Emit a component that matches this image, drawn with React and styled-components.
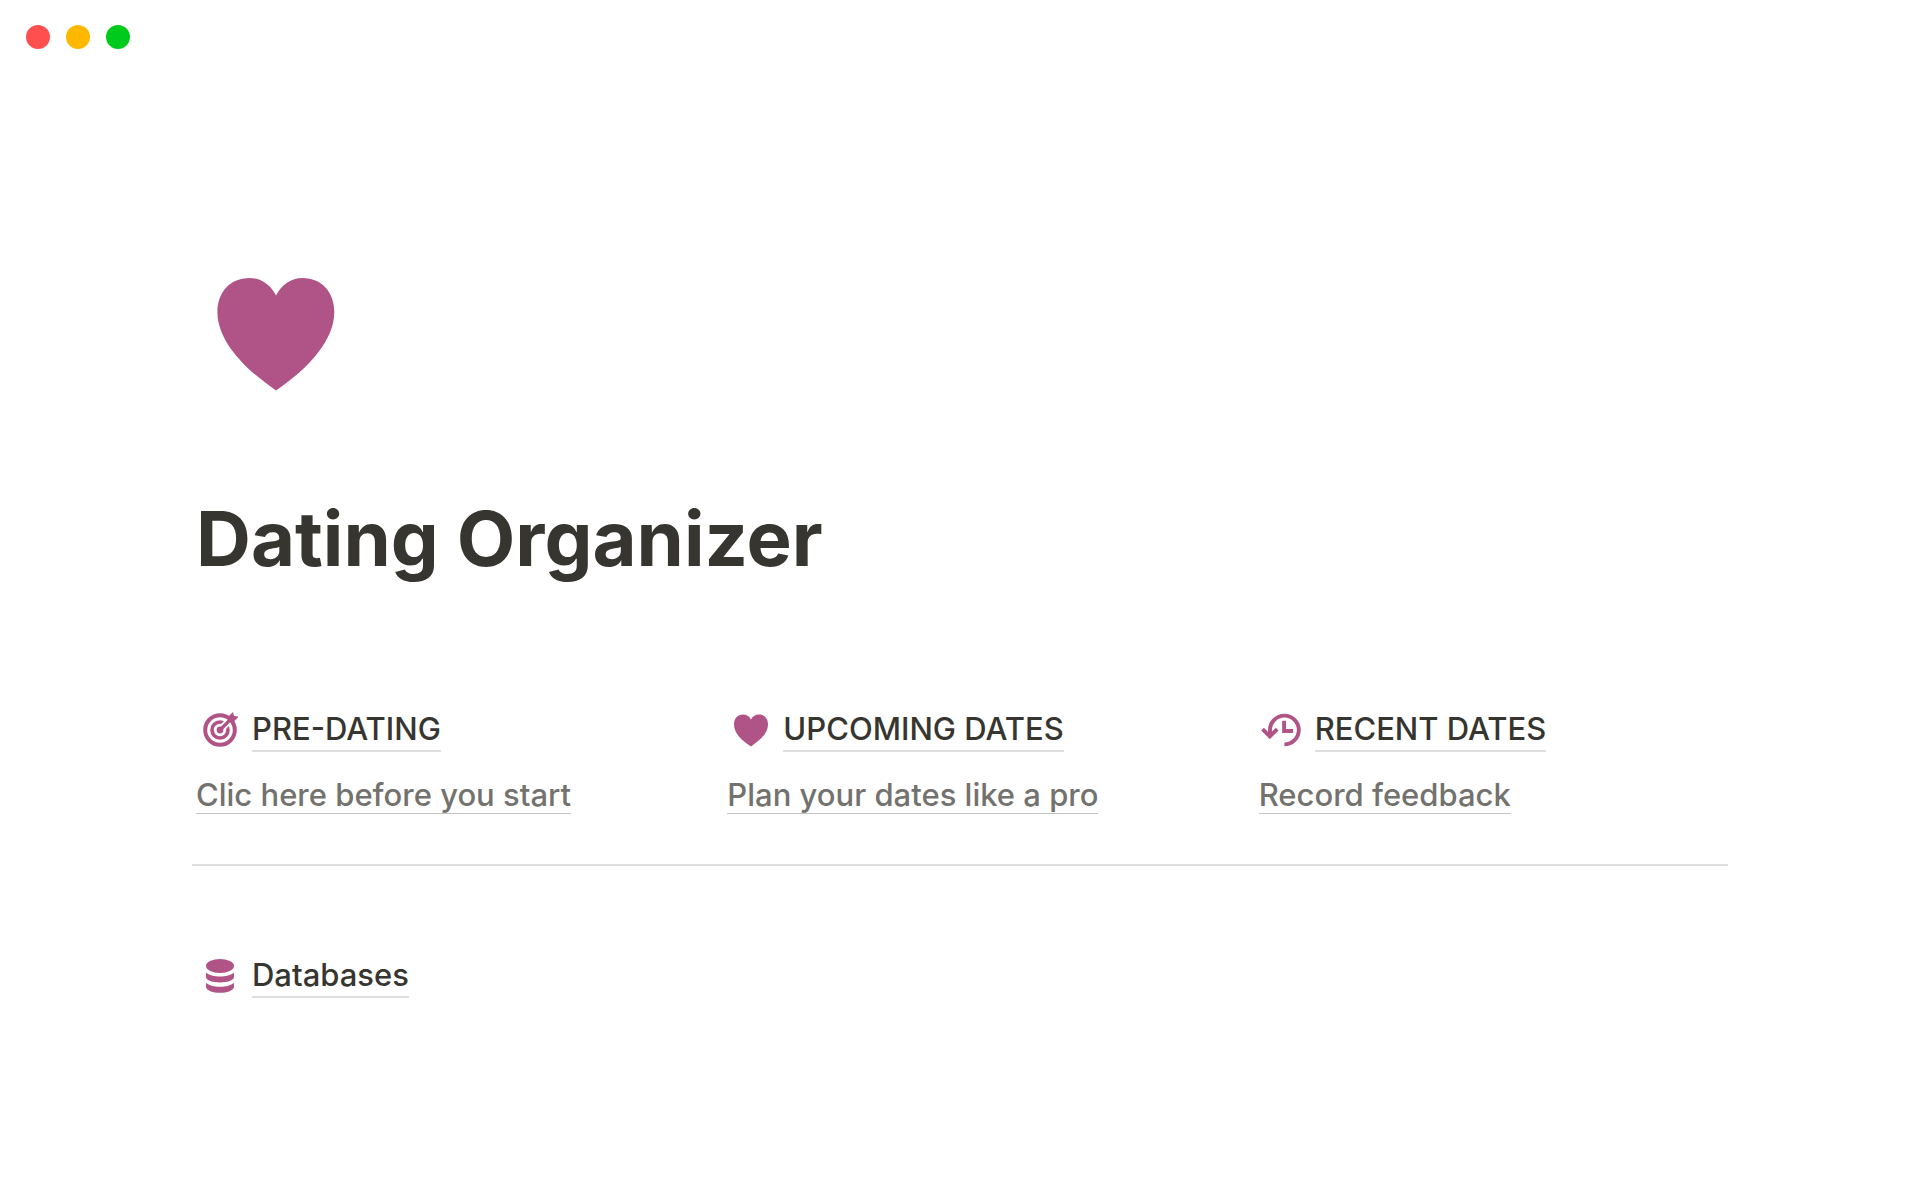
import React from "react";
import styled, { createGlobalStyle } from "styled-components";

const GlobalStyle = createGlobalStyle`
  * {
    box-sizing: border-box;
  }
  body {
    margin: 0;
    background: #fff;
    color: #37352f;
    font-family: Inter, "Liberation Sans", sans-serif;
  }
`

const Page = styled.div`
  min-height: 100vh;
`

const WindowBar = styled.header`
  display: flex;
  gap: 16px;
  padding: 25px 26px;
`

const Dot = styled.span`
  width: 24px;
  height: 24px;
  border-radius: 50%;
  background: ${props => props.$color};
`

const Content = styled.main`
  padding: 180px 10% 80px;
`

const Cover = styled.div`
  padding: 0 4px;
`

const PageIcon = styled.svg`
  display: block;
  width: 160px;
  height: 160px;
  fill: #b05488;
`

const Title = styled.h1`
  margin: 75px 0 119px;
  font-size: 76px;
  line-height: 98px;
  font-weight: 700;
`

const Columns = styled.div`
  display: grid;
  grid-template-columns: repeat(3, 1fr);
  gap: 58px;
`

const Column = styled.section`
  padding: 0 4px;
  white-space: nowrap;
`

const Heading = styled.h2`
  display: flex;
  align-items: center;
  gap: 8px;
  margin: 0;
  font-size: 31px;
  font-weight: 500;
`

const Icon = styled.svg`
  flex: none;
  width: 48px;
  height: 48px;
  fill: #b05488;
`

const PageLink = styled.a`
  border-bottom: 2px solid #dededd;
  color: inherit;
  line-height: 42px;
  text-decoration: none;
`

const Note = styled.p`
  display: flex;
  margin: 23px 0 0;
`

const NoteLink = styled.a`
  border-bottom: 1px solid #c4c4c2;
  color: #73726e;
  font-size: 31px;
  line-height: 36px;
  font-weight: 500;
  text-decoration: none;
`

const Divider = styled.hr`
  height: 2px;
  margin: 50px 0 86px;
  border: 0;
  background: #dededd;
`

const TargetIcon = () => (
  <Icon viewBox="0 0 48 48" aria-hidden="true">
    <g fill="none" stroke="#b05488">
      <circle cx="24" cy="24" r="14.8" strokeWidth="4" />
      <circle cx="24" cy="24" r="8" strokeWidth="3.6" />
    </g>
    <path fill="none" stroke="#fff" strokeWidth="7" d="M26 22 L31.6 16.4" />
    <circle cx="24" cy="24" r="3.4" />
    <path fill="none" stroke="#b05488" strokeWidth="3.2" d="M24 24 L35 13" />
    <path d="M31.8 16.2 V11 L37 6 L38 10 L42 10.6 V11.6 L37 16.2Z" />
  </Icon>
);

const HeartIcon = () => (
  <Icon viewBox="0 0 48 48" aria-hidden="true">
    <path d="M24 13.6 C25.6 10.4 28.6 8.6 32 8.6 C37.4 8.6 41 12.6 41 18.4 C41 26.6 34 34 24 40.4 C14 34 7 26.6 7 18.4 C7 12.6 10.6 8.6 16 8.6 C19.4 8.6 22.4 10.4 24 13.6Z" />
  </Icon>
);

const HistoryIcon = () => (
  <Icon viewBox="0 0 48 48" aria-hidden="true">
    <g fill="none" stroke="#b05488" strokeWidth="3.9">
      <path d="M11 30 V24 A14.4 14.4 0 1 1 25.4 38.4" />
      <path d="M3.5 23.2 L10.9 30.4 L18.2 23.2" />
      <path d="M25.1 14.7 V25 H34" />
    </g>
  </Icon>
);

const DatabaseIcon = () => (
  <Icon viewBox="0 0 48 48" aria-hidden="true">
    <ellipse cx="24" cy="14" rx="14" ry="7" />
    <path d="M10 20.4 C16 25.8 32 25.8 38 20.4 V25 C38 32.2 10 32.2 10 25Z" />
    <path d="M10 30.8 C16 36.2 32 36.2 38 30.8 V34.4 C38 42.8 10 42.8 10 34.4Z" />
  </Icon>
);

const sections = [
  { title: "PRE-DATING", note: "Clic here before you start", icon: TargetIcon },
  { title: "UPCOMING DATES", note: "Plan your dates like a pro", icon: HeartIcon },
  { title: "RECENT DATES", note: "Record feedback", icon: HistoryIcon },
];

const App = () => (
  <Page>
    <GlobalStyle />
    <WindowBar>
      <Dot $color="#ff4f4f" />
      <Dot $color="#ffb800" />
      <Dot $color="#00ca1c" />
    </WindowBar>
    <Content>
      <Cover>
        <PageIcon viewBox="0 0 160 160" aria-hidden="true">
          <path d="M80 41.4 C85.5 31 95 24 106.5 24 C125.5 24 138.3 38 138.3 58 C138.3 86 113 114 80 136.4 C47 114 21.4 86 21.4 58 C21.4 38 34.5 24 53.5 24 C65 24 74.5 31 80 41.4Z" />
        </PageIcon>
        <Title>Dating Organizer</Title>
      </Cover>
      <Columns>
        {sections.map(({ title, note, icon: SectionIcon }) => (
          <Column key={title}>
            <Heading>
              <SectionIcon />
              <PageLink href="#">{title}</PageLink>
            </Heading>
            <Note>
              <NoteLink href="#">{note}</NoteLink>
            </Note>
          </Column>
        ))}
      </Columns>
      <Divider />
      <Column>
        <Heading>
          <DatabaseIcon />
          <PageLink href="#">Databases</PageLink>
        </Heading>
      </Column>
    </Content>
  </Page>
);

export default App;
